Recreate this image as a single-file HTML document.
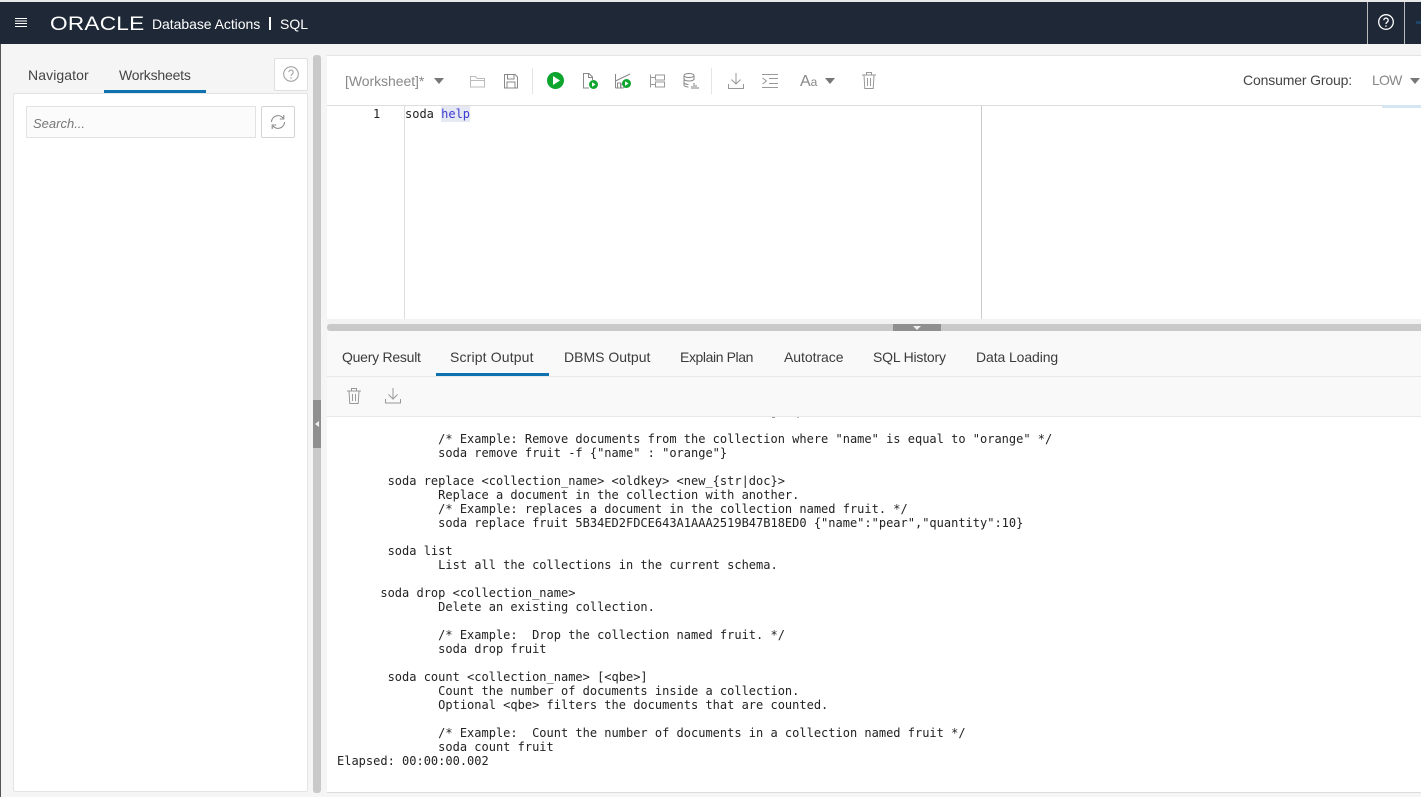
<!DOCTYPE html>
<html><head><meta charset="utf-8">
<style>
html,body{margin:0;padding:0;width:1421px;height:797px;overflow:hidden;background:#f5f5f5;font-family:"Liberation Sans",sans-serif}
.a{position:absolute}
.t{position:absolute;font-size:14px;color:#3c3c3c;line-height:20px;white-space:nowrap}
.m{font-family:"DejaVu Sans Mono","Liberation Mono",monospace;font-size:12px;color:#222;white-space:pre;line-height:14px}
svg{position:absolute;overflow:visible;fill:none}
</style></head><body>
<div class="a" style="left:0;top:0;width:1421px;height:2px;background:#e8e8e8"></div>
<div class="a" style="left:0;top:2px;width:1421px;height:42px;background:#1e2836"></div>
<div class="a" style="left:0;top:44px;width:1px;height:753px;background:#555"></div>
<!-- hamburger -->
<div class="a" style="left:15px;top:18px;width:12px;height:1px;background:#fff;box-shadow:0 2.5px 0 #fff,0 5px 0 #fff,0 8px 0 #fff"></div>
<div class="a" style="left:50px;top:14px;color:#fff;font-size:19.5px;line-height:20px;letter-spacing:.2px;transform:scaleX(1.16);transform-origin:0 50%">ORACLE</div>
<div class="a" style="left:152px;top:15px;color:#fff;font-size:14px;line-height:18px;letter-spacing:-.05px;white-space:nowrap">Database Actions</div>
<div class="a" style="left:269px;top:17px;width:2px;height:13px;background:#fff"></div>
<div class="a" style="left:280px;top:15px;color:#fff;font-size:14px;line-height:18px">SQL</div>
<div class="a" style="left:1367px;top:2px;width:1px;height:42px;background:#bbb"></div>
<div class="a" style="left:1404px;top:2px;width:1px;height:42px;background:#bbb"></div>
<svg style="left:1378px;top:14px" width="16" height="16" viewBox="0 0 16 16"><circle cx="8" cy="8" r="7.3" stroke="#fff" stroke-width="1.3"/><path d="M5.8 6.2a2.2 2.2 0 1 1 3.4 1.9c-.8.5-1.2.9-1.2 1.9" stroke="#fff" stroke-width="1.3"/><circle cx="8" cy="12" r=".8" fill="#fff"/></svg>
<div class="a" style="left:1416px;top:21px;width:5px;height:3px;background:#1f4468"></div>

<!-- left panel -->
<div class="t" style="left:28px;top:65px;color:#444;letter-spacing:.1px">Navigator</div>
<div class="t" style="left:119px;top:65px;color:#444;letter-spacing:-.2px">Worksheets</div>
<div class="a" style="left:104px;top:90px;width:102px;height:3px;background:#0f72b0"></div>
<div class="a" style="left:274px;top:58px;width:32px;height:31px;background:#fff;border:1px solid #e0e0e0;border-radius:2px"></div>
<svg style="left:283px;top:66px" width="16" height="16" viewBox="0 0 16 16"><circle cx="8" cy="8" r="7.3" stroke="#999" stroke-width="1"/><path d="M5.8 6.2a2.2 2.2 0 1 1 3.4 1.9c-.8.5-1.2.9-1.2 1.9" stroke="#999" stroke-width="1"/><circle cx="8" cy="12" r=".7" fill="#999"/></svg>
<div class="a" style="left:13px;top:93px;width:293px;height:697px;background:#fff;border:1px solid #e4e4e4;border-radius:2px;box-sizing:content-box"></div>
<div class="a" style="left:26px;top:106px;width:228px;height:30px;background:#fbfbfb;border:1px solid #e2e2e2"></div>
<div class="a" style="left:33px;top:115px;font-size:13px;font-style:italic;color:#777;line-height:18px">Search...</div>
<div class="a" style="left:261px;top:106px;width:32px;height:30px;background:#fff;border:1px solid #d4d4d4;border-radius:2px"></div>
<svg style="left:270px;top:114px" width="16" height="16" viewBox="0 0 16 16"><path d="M1.5 8A6.5 6.5 0 0 1 13 4M14.500 8A6.500 6.500 0 0 1 3 12" stroke="#888" stroke-width="1.100"/><path d="M13.800 1v4h-4M2.200 15v-4h4" stroke="#888" stroke-width="1.100"/></svg>

<!-- vertical splitter -->
<div class="a" style="left:313px;top:55px;width:8px;height:738px;background:#c9c9c9;border-radius:3px"></div>
<div class="a" style="left:313px;top:400px;width:8px;height:48px;background:#8f8f8f"></div>
<div class="a" style="left:315px;top:421px;width:0;height:0;border:3px solid transparent;border-right:4px solid #eee;border-left:0"></div>

<!-- main panel -->
<div class="a" style="left:327px;top:55px;width:1094px;height:49px;background:#fff;border-top:1px solid #e4e4e4;border-bottom:1px solid #ddd"></div>
<div class="t" style="left:345px;top:71px;color:#888;letter-spacing:-.05px">[Worksheet]*</div>
<div class="a" style="left:434px;top:78px;border:5px solid transparent;border-top:6px solid #777;border-bottom:0"></div>
<svg style="left:470px;top:74px" width="15" height="14" viewBox="0 0 15 14"><path d="M.5 13V2.500h5l1.500 2h7.500V13zM.5 6.500h14" stroke="#bbb"/></svg>
<svg style="left:504px;top:73px" width="14" height="16" viewBox="0 0 14 16"><path d="M.5 1.500h10.500l2.500 2.500v11H.5zM3.500 1.500v4.500h6.500v-4.500M3 15v-6h8v6" stroke="#888"/></svg>
<div class="a" style="left:532px;top:68px;width:1px;height:26px;background:#e4e4e4"></div>
<div class="a" style="left:711px;top:68px;width:1px;height:26px;background:#e4e4e4"></div>
<svg style="left:547px;top:72px" width="17" height="17" viewBox="0 0 17 17"><circle cx="8.500" cy="8.500" r="8.500" fill="#0ea52f"/><path d="M6 4l7 4.500-7 4.500z" fill="#fff"/></svg>
<svg style="left:583px;top:73px" width="15" height="16" viewBox="0 0 15 16"><path d="M6 15H.5V.5h5.500l3.500 3.500v3M5.500 .5v4h4" stroke="#888"/><circle cx="10.500" cy="11.500" r="4.500" fill="#0ea52f"/><path d="M9 9.200l3.600 2.300L9 13.800z" fill="#fff"/></svg>
<svg style="left:615px;top:73px" width="17" height="16" viewBox="0 0 17 16"><path d="M.5 1v14M.500 8L15 1M2.500 15v-5h3v5M6 15v-4h3v4M.5 15h8" stroke="#888"/><circle cx="11.500" cy="10.500" r="4.500" fill="#0ea52f"/><path d="M10 8.200l3.600 2.300L10 12.800z" fill="#fff"/></svg>
<svg style="left:650px;top:74px" width="15" height="14" viewBox="0 0 15 14"><path d="M.5 .5v13M.5 3.500h5M.5 10.500h5M5.500 1h9v5h-9zM5.500 8h9v5h-9z" stroke="#999"/></svg>
<svg style="left:683px;top:73px" width="17" height="17" viewBox="0 0 17 17"><ellipse cx="6" cy="2.500" rx="5" ry="2" stroke="#888"/><path d="M1 2.500V12c0 1 2 1.800 4.500 2M1 6c0 1 2 2 5 2s5-1 5-2M1 9.500c0 1 2 2 4.500 2M11 2.500V7" stroke="#888"/><path d="M9 16v-3M11 16v-6M13 16v-4M15 16v-2" stroke="#aaa" stroke-width="1.500"/></svg>
<svg style="left:728px;top:73px" width="16" height="16" viewBox="0 0 16 16"><path d="M8 0v11M3.500 6.500L8 11l4.500-4.500M.5 11v4.500h15V11" stroke="#999"/></svg>
<svg style="left:762px;top:74px" width="16" height="14" viewBox="0 0 16 14"><path d="M0 .5h16M0 13.500h16M7 4.500h9M7 9.500h9M.5 4l4 3-4 3" stroke="#999"/></svg>
<div class="a" style="left:800px;top:72px;font-size:16px;color:#888;line-height:20px">A<span style="font-size:12px">a</span></div>
<div class="a" style="left:825px;top:78px;border:5px solid transparent;border-top:6px solid #777;border-bottom:0"></div>
<svg style="left:862px;top:72px" width="14" height="17" viewBox="0 0 14 17"><path d="M0 3h14M4.500 3V.5h5V3M2 3l.8 13.500h8.400L12 3M5.500 6v8M8.500 6v8" stroke="#999"/></svg>
<div class="t" style="left:1243px;top:70px;color:#444;letter-spacing:-.15px">Consumer Group:</div>
<div class="t" style="left:1372px;top:70px;color:#888;letter-spacing:-.8px">LOW</div>
<div class="a" style="left:1410px;top:78px;border:5px solid transparent;border-top:6px solid #777;border-bottom:0"></div>

<!-- editor -->
<div class="a" style="left:327px;top:106px;width:1094px;height:213px;background:#fff"></div>
<div class="a" style="left:404px;top:106px;width:1px;height:213px;background:#ddd"></div>
<div class="a" style="left:981px;top:106px;width:1px;height:213px;background:#ccc"></div>
<div class="a" style="left:1382px;top:105px;width:39px;height:3px;background:#d5e6f3"></div>
<div class="a m" style="left:373px;top:107px">1</div>
<div class="a" style="left:441px;top:106px;width:29px;height:16px;background:#e6e8f4"></div>
<div class="a m" style="left:405px;top:107px">soda <span style="color:#3a3ad0">help</span></div>

<!-- horizontal splitter -->
<div class="a" style="left:327px;top:319px;width:1094px;height:5px;background:#f2f2f2"></div>
<div class="a" style="left:327px;top:324px;width:1094px;height:7px;background:#c9c9c9;border-radius:3px 0 0 3px"></div>
<div class="a" style="left:893px;top:324px;width:48px;height:7px;background:#8f8f8f"></div>
<div class="a" style="left:913px;top:326px;border:4px solid transparent;border-top:4px solid #eee;border-bottom:0"></div>

<!-- tabs -->
<div class="a" style="left:327px;top:331px;width:1094px;height:85px;background:#f9f9f9"></div>
<div class="t" style="left:342px;top:347px;letter-spacing:-.25px">Query Result</div>
<div class="t" style="left:450px;top:347px;letter-spacing:.15px">Script Output</div>
<div class="a" style="left:436px;top:373px;width:113px;height:3px;background:#0f72b0"></div>
<div class="t" style="left:564px;top:347px">DBMS Output</div>
<div class="t" style="left:680px;top:347px;letter-spacing:-.4px">Explain Plan</div>
<div class="t" style="left:784px;top:347px;letter-spacing:-.05px">Autotrace</div>
<div class="t" style="left:873px;top:347px;letter-spacing:-.2px">SQL History</div>
<div class="t" style="left:976px;top:347px;letter-spacing:-.1px">Data Loading</div>
<div class="a" style="left:327px;top:376px;width:1094px;height:1px;background:#e8e8e8"></div>
<svg style="left:347px;top:388px" width="14" height="16" viewBox="0 0 14 16"><path d="M0 3h14M4.500 3V.5h5V3M2 3l.8 12.500h8.400L12 3M5.500 6v7M8.500 6v7" stroke="#999"/></svg>
<svg style="left:385px;top:388px" width="16" height="16" viewBox="0 0 16 16"><path d="M8 0v11M3.500 6.500L8 11l4.500-4.500M.5 11v4h15v-4" stroke="#999"/></svg>
<div class="a" style="left:327px;top:416px;width:1094px;height:1px;background:#e8e8e8"></div>

<!-- output -->
<div class="a" style="left:327px;top:417px;width:1094px;height:375px;background:#fff;border-bottom:1px solid #ddd"></div>
<div class="a" style="left:772px;top:417px;width:3px;height:1px;background:#999"></div>
<div class="a" style="left:797px;top:417px;width:2px;height:1px;background:#bbb"></div>
<div class="a m" style="left:337px;top:432px;">              /* Example: Remove documents from the collection where "name" is equal to "orange" */
              soda remove fruit -f {"name" : "orange"}

       soda replace &lt;collection_name&gt; &lt;oldkey&gt; &lt;new_{str|doc}&gt;
              Replace a document in the collection with another.
              /* Example: replaces a document in the collection named fruit. */
              soda replace fruit 5B34ED2FDCE643A1AAA2519B47B18ED0 {"name":"pear","quantity":10}

       soda list
              List all the collections in the current schema.

      soda drop &lt;collection_name&gt;
              Delete an existing collection.

              /* Example:  Drop the collection named fruit. */
              soda drop fruit

       soda count &lt;collection_name&gt; [&lt;qbe&gt;]
              Count the number of documents inside a collection.
              Optional &lt;qbe&gt; filters the documents that are counted.

              /* Example:  Count the number of documents in a collection named fruit */
              soda count fruit
Elapsed: 00:00:00.002</div>
</body></html>
